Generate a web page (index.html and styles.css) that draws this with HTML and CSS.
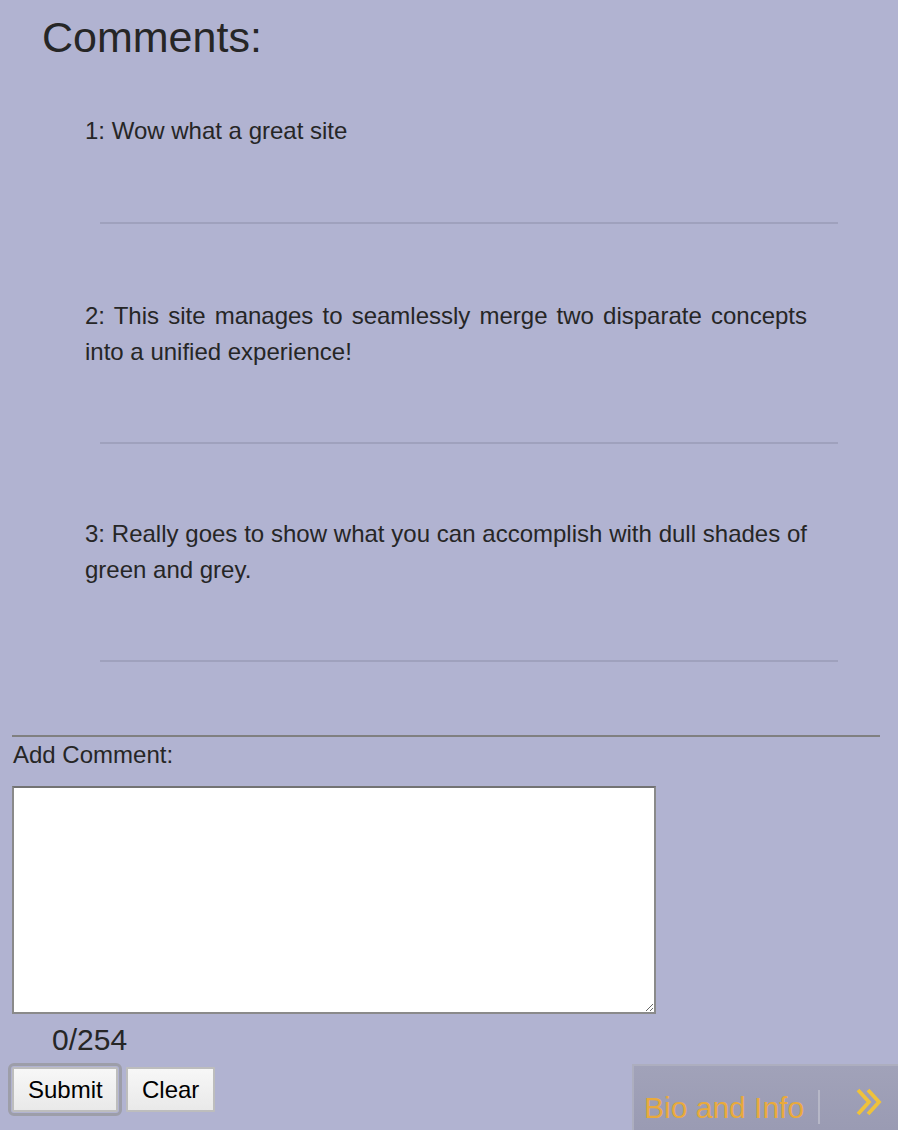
FILE: index.html
```html
<!DOCTYPE html>
<html>
<head>
<meta charset="utf-8">
<title>Comments</title>
<link rel="stylesheet" href="styles.css">
</head>
<body>
<section class="comments">
  <h1 class="comments-title">Comments:</h1>
  <div class="comment-list">
    <div class="comment">
      <p class="comment-text">1: Wow what a great site</p>
      <div class="comment-rule"></div>
    </div>
    <div class="comment">
      <p class="comment-text">2: This site manages to seamlessly merge two disparate concepts into a unified experience!</p>
      <div class="comment-rule"></div>
    </div>
    <div class="comment">
      <p class="comment-text">3: Really goes to show what you can accomplish with dull shades of green and grey.</p>
      <div class="comment-rule"></div>
    </div>
  </div>
</section>
<section class="add-comment">
  <div class="separator"></div>
  <label class="add-label" for="newComment">Add Comment:</label>
  <textarea id="newComment" class="comment-input"></textarea>
  <div class="counter">0/254</div>
  <div class="actions">
    <button class="btn btn-focus" type="button">Submit</button>
    <button class="btn" type="button">Clear</button>
  </div>
</section>
<div class="bio-tab">
  <span class="bio-label">Bio and Info</span>
  <span class="bio-divider"></span>
  <svg class="bio-chevron" width="28" height="28" viewBox="0 0 28 28" aria-hidden="true">
    <path d="M3 2 L14 14 L3 26 M13 2 L24 14 L13 26" fill="none" stroke="#efc23a" stroke-width="3.8" stroke-linejoin="miter"/>
  </svg>
</div>
</body>
</html>
```

FILE: styles.css
```css
html, body {
  margin: 0;
  padding: 0;
}
body {
  background: #b1b3d1;
  font-family: "Liberation Sans", Arial, Helvetica, sans-serif;
  color: #262626;
  min-height: 1130px;
}
.comments {
  padding-top: 12px;
}
.comments-title {
  margin: 0 0 0 42px;
  font-size: 43px;
  font-weight: normal;
  line-height: 50px;
  color: #262626;
}
.comment-list {
  padding-top: 51px;
}
.comment-text {
  margin: 0 0 0 85px;
  width: 722px;
  font-size: 24px;
  line-height: 36px;
  text-align: justify;
}
.comment-rule {
  margin: 73px 0 74px 100px;
  width: 738px;
  height: 2px;
  background: #9fa1bd;
}
.comment:nth-child(2) .comment-rule {
  margin-top: 72px;
  margin-bottom: 72px;
}
.comment:nth-child(3) .comment-rule {
  margin-top: 72px;
  margin-bottom: 73px;
}
.add-comment {
  padding-left: 12px;
}
.separator {
  width: 868px;
  height: 2px;
  background: #808080;
}
.add-label {
  display: block;
  margin-top: 4px;
  font-size: 24px;
  line-height: 28px;
  margin-left: 1px;
}
.comment-input {
  display: block;
  margin-top: 17px;
  box-sizing: border-box;
  width: 644px;
  height: 228px;
  border: 2px solid #8a8a8a;
  border-top-color: #737373;
  background: #fff;
  padding: 2px;
  font-family: inherit;
  font-size: 16px;
  resize: both;
}
.counter {
  margin: 9px 0 0 40px;
  font-size: 30px;
  line-height: 34px;
  color: #262626;
}
.actions {
  display: flex;
  gap: 8px;
  margin-top: 10px;
}
.btn {
  box-sizing: border-box;
  height: 45px;
  padding: 0 14px;
  border: 2px solid #bdbdbd;
  border-radius: 1px;
  background: linear-gradient(#f7f7f7, #e9e9e9);
  font-family: "Liberation Sans", Arial, sans-serif;
  font-size: 24px;
  color: #000;
}
.btn-focus {
  width: 106px;
  outline: 3px solid #9d9ea9;
  outline-offset: 1px;
  border-radius: 2px;
}
.bio-tab {
  position: fixed;
  right: 0;
  bottom: 0;
  box-sizing: border-box;
  width: 266px;
  height: 66px;
  border-top: 2px solid #adaebf;
  border-left: 2px solid #adaebf;
  background: linear-gradient(#a1a2b9, #9a9bb3);
  display: flex;
  align-items: center;
  padding: 20px 0 0 10px;
}
.bio-label {
  font-size: 30px;
  line-height: 34px;
  color: #e9aa3c;
}
.bio-divider {
  width: 2px;
  height: 34px;
  background: #b6b7c7;
  margin-left: 14px;
  margin-top: -3px;
}
.bio-chevron {
  margin-left: 35px;
  margin-top: -12px;
}
```
